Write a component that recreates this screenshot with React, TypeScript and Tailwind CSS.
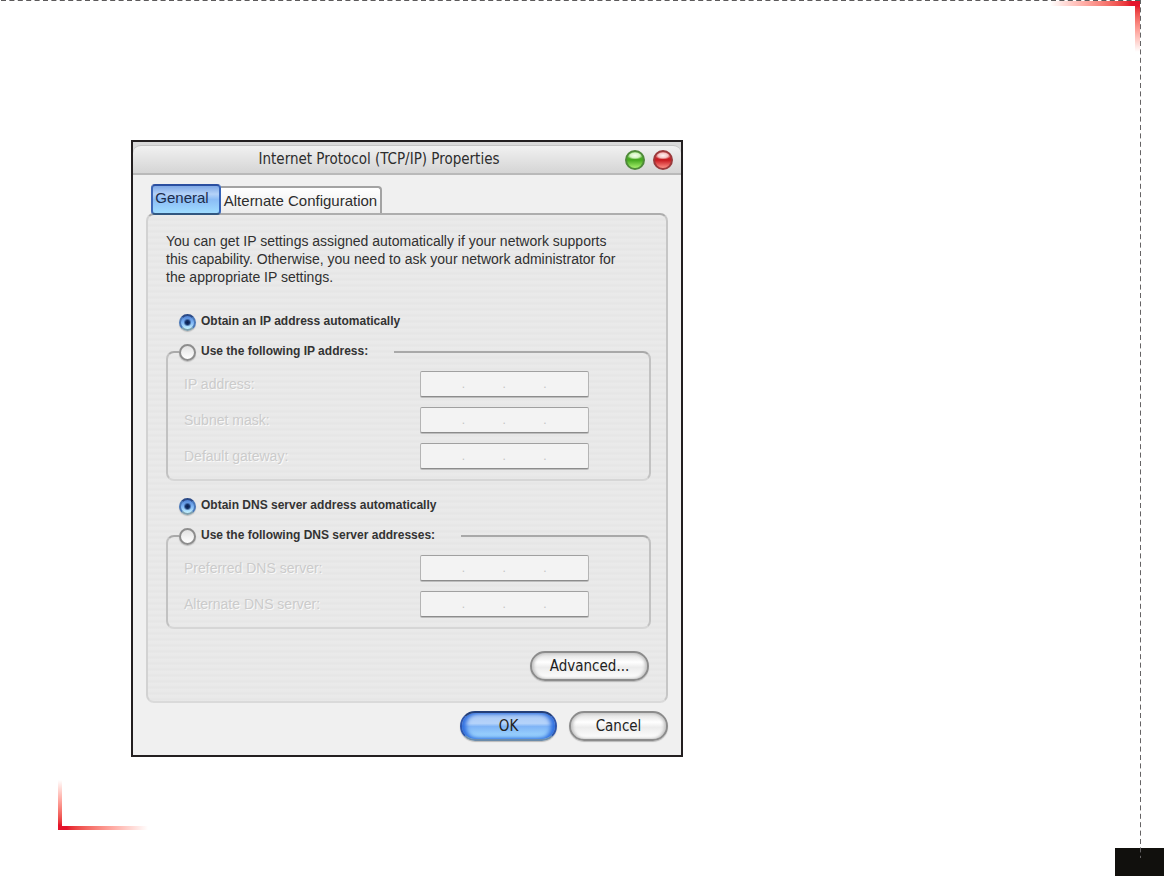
import { useState } from "react";

const stripes =
  "bg-[repeating-linear-gradient(180deg,#eaeaea_0px,#e9e9e9_3px,#e5e5e5_4px,#e8e8e8_6px)]";

const glossy =
  "h-[30px] rounded-full border-2 font-['DejaVu_Sans_Condensed','Noto_Sans',sans-serif] text-[15px] leading-none text-[#222]";

const plain =
  "border-[#8c8c8c] bg-[linear-gradient(180deg,#dcdcdc_0%,#ffffff_35%,#ececec_55%,#ffffff_100%)] shadow-[inset_2px_0_3px_#c4c4c4,inset_-2px_0_3px_#c4c4c4,0_1px_1px_#b8b8b8]";

const primary =
  "border-t-[#243f78] border-x-[#2e56ac] border-b-[#6b8cab] bg-[linear-gradient(180deg,#a9c8f3_0%,#b5d3fa_40%,#7fb4f6_52%,#a4ddff_100%)] shadow-[inset_4px_0_4px_#2f6fe0,inset_-4px_0_4px_#2f6fe0,0_1px_1px_#b8b8b8]";

function AddressField({ id, label }: { id: string; label: string }) {
  return (
    <div className="flex items-center">
      <label
        htmlFor={id}
        className="w-[236px] text-sm text-[#cbcbcb] [text-shadow:1px_1px_0_#fafafa]"
      >
        {label}
      </label>
      <div className="flex h-[26px] w-[169px] items-center rounded-xs border border-x-[#b4b4b4] border-t-[#a0a0a0] border-b-[#8c8c8c] bg-[#f3f3f3] pl-1 text-xs text-[#c4c4c4] shadow-[0_1px_0_#bdbdbd]">
        {[0, 1, 2, 3].map((part) => (
          <div key={part} className="flex flex-1 items-center">
            <input
              id={part === 0 ? id : undefined}
              aria-label={part === 0 ? undefined : `${label} part ${part + 1}`}
              disabled
              className="w-full min-w-0 flex-1 bg-transparent text-center"
            />
            {part < 3 && <span className="w-1">.</span>}
          </div>
        ))}
      </div>
    </div>
  );
}

type RadioProps = {
  name: string;
  label: string;
  checked: boolean;
  onChange: () => void;
};

function Radio({ name, label, checked, onChange }: RadioProps) {
  return (
    <label className="flex h-[18px] items-center gap-[5px] font-['Liberation_Sans',sans-serif] text-xs font-bold text-[#333]">
      <input
        type="radio"
        name={name}
        checked={checked}
        onChange={onChange}
        className="size-[17px] shrink-0 appearance-none rounded-full border-2 border-[#8d8d8d] bg-[linear-gradient(180deg,#e2e2e2,#ffffff)] shadow-[0_1px_1px_#bbb] checked:border-t-[#2b4a87] checked:border-x-[#4a78b8] checked:border-b-[#7e9fae] checked:bg-[radial-gradient(circle_at_50%_50%,#0b1e4a_0px,#123067_2px,transparent_4px),linear-gradient(180deg,#4f82d4,#7fb6f5_50%,#c6f4ff)]"
      />
      <span className="pb-0.5">{label}</span>
    </label>
  );
}

type GroupProps = {
  name: string;
  auto: string;
  manual: string;
  fields: string[];
};

function AddressGroup({ name, auto, manual, fields }: GroupProps) {
  const [mode, setMode] = useState("auto");

  return (
    <div>
      <div className="pl-[31px]">
        <Radio
          name={name}
          label={auto}
          checked={mode === "auto"}
          onChange={() => setMode("auto")}
        />
      </div>
      <fieldset className="mt-3 mr-[15px] ml-[18px] rounded-lg border-2 border-t-[#a9a9a9] border-r-[#c2c2c2] border-b-[#d6d6d6] border-l-[#c2c2c2] pb-2.5">
        <legend className="ml-[11px] pr-[26px]">
          <Radio
            name={name}
            label={manual}
            checked={mode === "manual"}
            onChange={() => setMode("manual")}
          />
        </legend>
        <div className="flex flex-col gap-2.5 pt-2.5 pl-4">
          {fields.map((field) => (
            <AddressField
              key={field}
              id={field.toLowerCase().replace(/\W+/g, "-")}
              label={field}
            />
          ))}
        </div>
      </fieldset>
    </div>
  );
}

function PageMarks() {
  return (
    <div aria-hidden="true" className="pointer-events-none">
      <div className="absolute right-0 bottom-0 h-7 w-[49px] bg-[#11100d]" />
      <div className="absolute top-px right-6 h-[5px] w-[90px] bg-linear-to-l from-[#e5142b] from-10% to-white" />
      <div className="absolute top-px right-6 h-[51px] w-[5px] bg-linear-to-b from-[#e5142b] from-10% to-white" />
      <div className="absolute bottom-[46px] left-[58px] h-1 w-[90px] bg-linear-to-r from-[#e5142b] from-10% to-white" />
      <div className="absolute bottom-[46px] left-[58px] h-[50px] w-1 bg-linear-to-t from-[#e5142b] from-10% to-white" />
      <div className="absolute top-0 right-6 left-0 h-px">
        <svg className="block h-px w-full">
          <line x1="100%" x2="0" y1="0.5" y2="0.5" stroke="#5c5a5b" strokeDasharray="5 3.4" />
        </svg>
      </div>
      <div className="absolute top-0 right-[23px] bottom-[18px] w-px">
        <svg className="block h-full w-px">
          <line x1="0.5" x2="0.5" y1="-1" y2="100%" stroke="#656364" strokeDasharray="5 3.4" />
        </svg>
      </div>
    </div>
  );
}

export default function App() {
  return (
    <main className="relative min-h-screen bg-white px-4 pt-[140px] pb-24 font-['Liberation_Sans',sans-serif] md:pl-[131px]">
      <PageMarks />
      <section className="w-full max-w-[552px] border-2 border-[#231f20] bg-[#f0f0f0]">
        <header className="bg-[#d9d9d9] pt-[3px]">
          <div className="flex h-[30px] items-center rounded-t-lg border-t border-b-2 border-t-[#c4c4c4] border-b-[#b9b9b9] bg-linear-to-b from-[#f1f1f1] to-[#d5d5d5] pr-2">
            <h1 className="flex-1 text-center font-['DejaVu_Sans_Condensed','Noto_Sans',sans-serif] text-[15px] leading-none text-[#2d2d2d]">
              Internet Protocol (TCP/IP) Properties
            </h1>
            <div className="flex w-12 gap-2">
              <button
                aria-label="Minimize"
                className="size-5 shrink-0 rounded-full border-2 border-[#4f8a3a] bg-[radial-gradient(ellipse_8px_4px_at_50%_22%,#f4ffee_0%,#d3f5c0_60%,transparent_100%),linear-gradient(180deg,#6cbf4a_0%,#44a81e_50%,#a6f06c_100%)]"
              />
              <button
                aria-label="Close"
                className="size-5 shrink-0 rounded-full border-2 border-[#9a3a3c] bg-[radial-gradient(ellipse_8px_4px_at_50%_22%,#fff2f2_0%,#f5c4c4_60%,transparent_100%),linear-gradient(180deg,#cf5054_0%,#c8191f_50%,#ff8f86_100%)]"
              />
            </div>
          </div>
        </header>

        <div className="px-[13px] pt-[9px] pb-3.5">
          <div role="tablist" className="flex items-end pl-[5px]">
            <button
              role="tab"
              aria-selected="true"
              className="z-10 -mb-0.5 h-[31px] w-[70px] rounded-sm border-2 border-t-[#2b4fa0] border-r-[#3563b8] border-b-[#31567f] border-l-[#3d66b5] bg-[linear-gradient(180deg,#7fa9e6_0%,#b4d2f8_30%,#8bbcf5_50%,#9fdcff_100%)] pr-2 pb-1 text-[15px] leading-none text-[#1d2c4a]"
            >
              General
            </button>
            <button
              role="tab"
              aria-selected="false"
              className="h-[27px] w-[161px] rounded-tr-sm border-t-2 border-r-2 border-[#a3a3a3] bg-linear-to-b from-white to-[#ececec] text-[15px] leading-none text-[#2d2d2d]"
            >
              Alternate Configuration
            </button>
          </div>

          <div
            role="tabpanel"
            className={`rounded-lg border-2 border-t-[#adadad] border-r-[#c6c6c6] border-b-[#dadada] border-l-[#d2d2d2] pt-[17px] pb-5 ${stripes}`}
          >
            <p className="pr-10 pl-[18px] text-sm leading-[18px] text-[#303030]">
              You can get IP settings assigned automatically if your network supports
              this capability. Otherwise, you need to ask your network administrator for
              the appropriate IP settings.
            </p>
            <div className="mt-[27px] flex flex-col gap-4">
              <AddressGroup
                name="ip"
                auto="Obtain an IP address automatically"
                manual="Use the following IP address:"
                fields={["IP address:", "Subnet mask:", "Default gateway:"]}
              />
              <AddressGroup
                name="dns"
                auto="Obtain DNS server address automatically"
                manual="Use the following DNS server addresses:"
                fields={["Preferred DNS server:", "Alternate DNS server:"]}
              />
            </div>
            <div className="mt-[22px] flex justify-end pr-[17px]">
              <button className={`w-[119px] ${glossy} ${plain}`}>Advanced...</button>
            </div>
          </div>

          <div className="mt-2 flex justify-end gap-3">
            <button className={`w-[97px] ${glossy} ${primary}`}>OK</button>
            <button className={`w-[99px] ${glossy} ${plain}`}>Cancel</button>
          </div>
        </div>
      </section>
    </main>
  );
}
